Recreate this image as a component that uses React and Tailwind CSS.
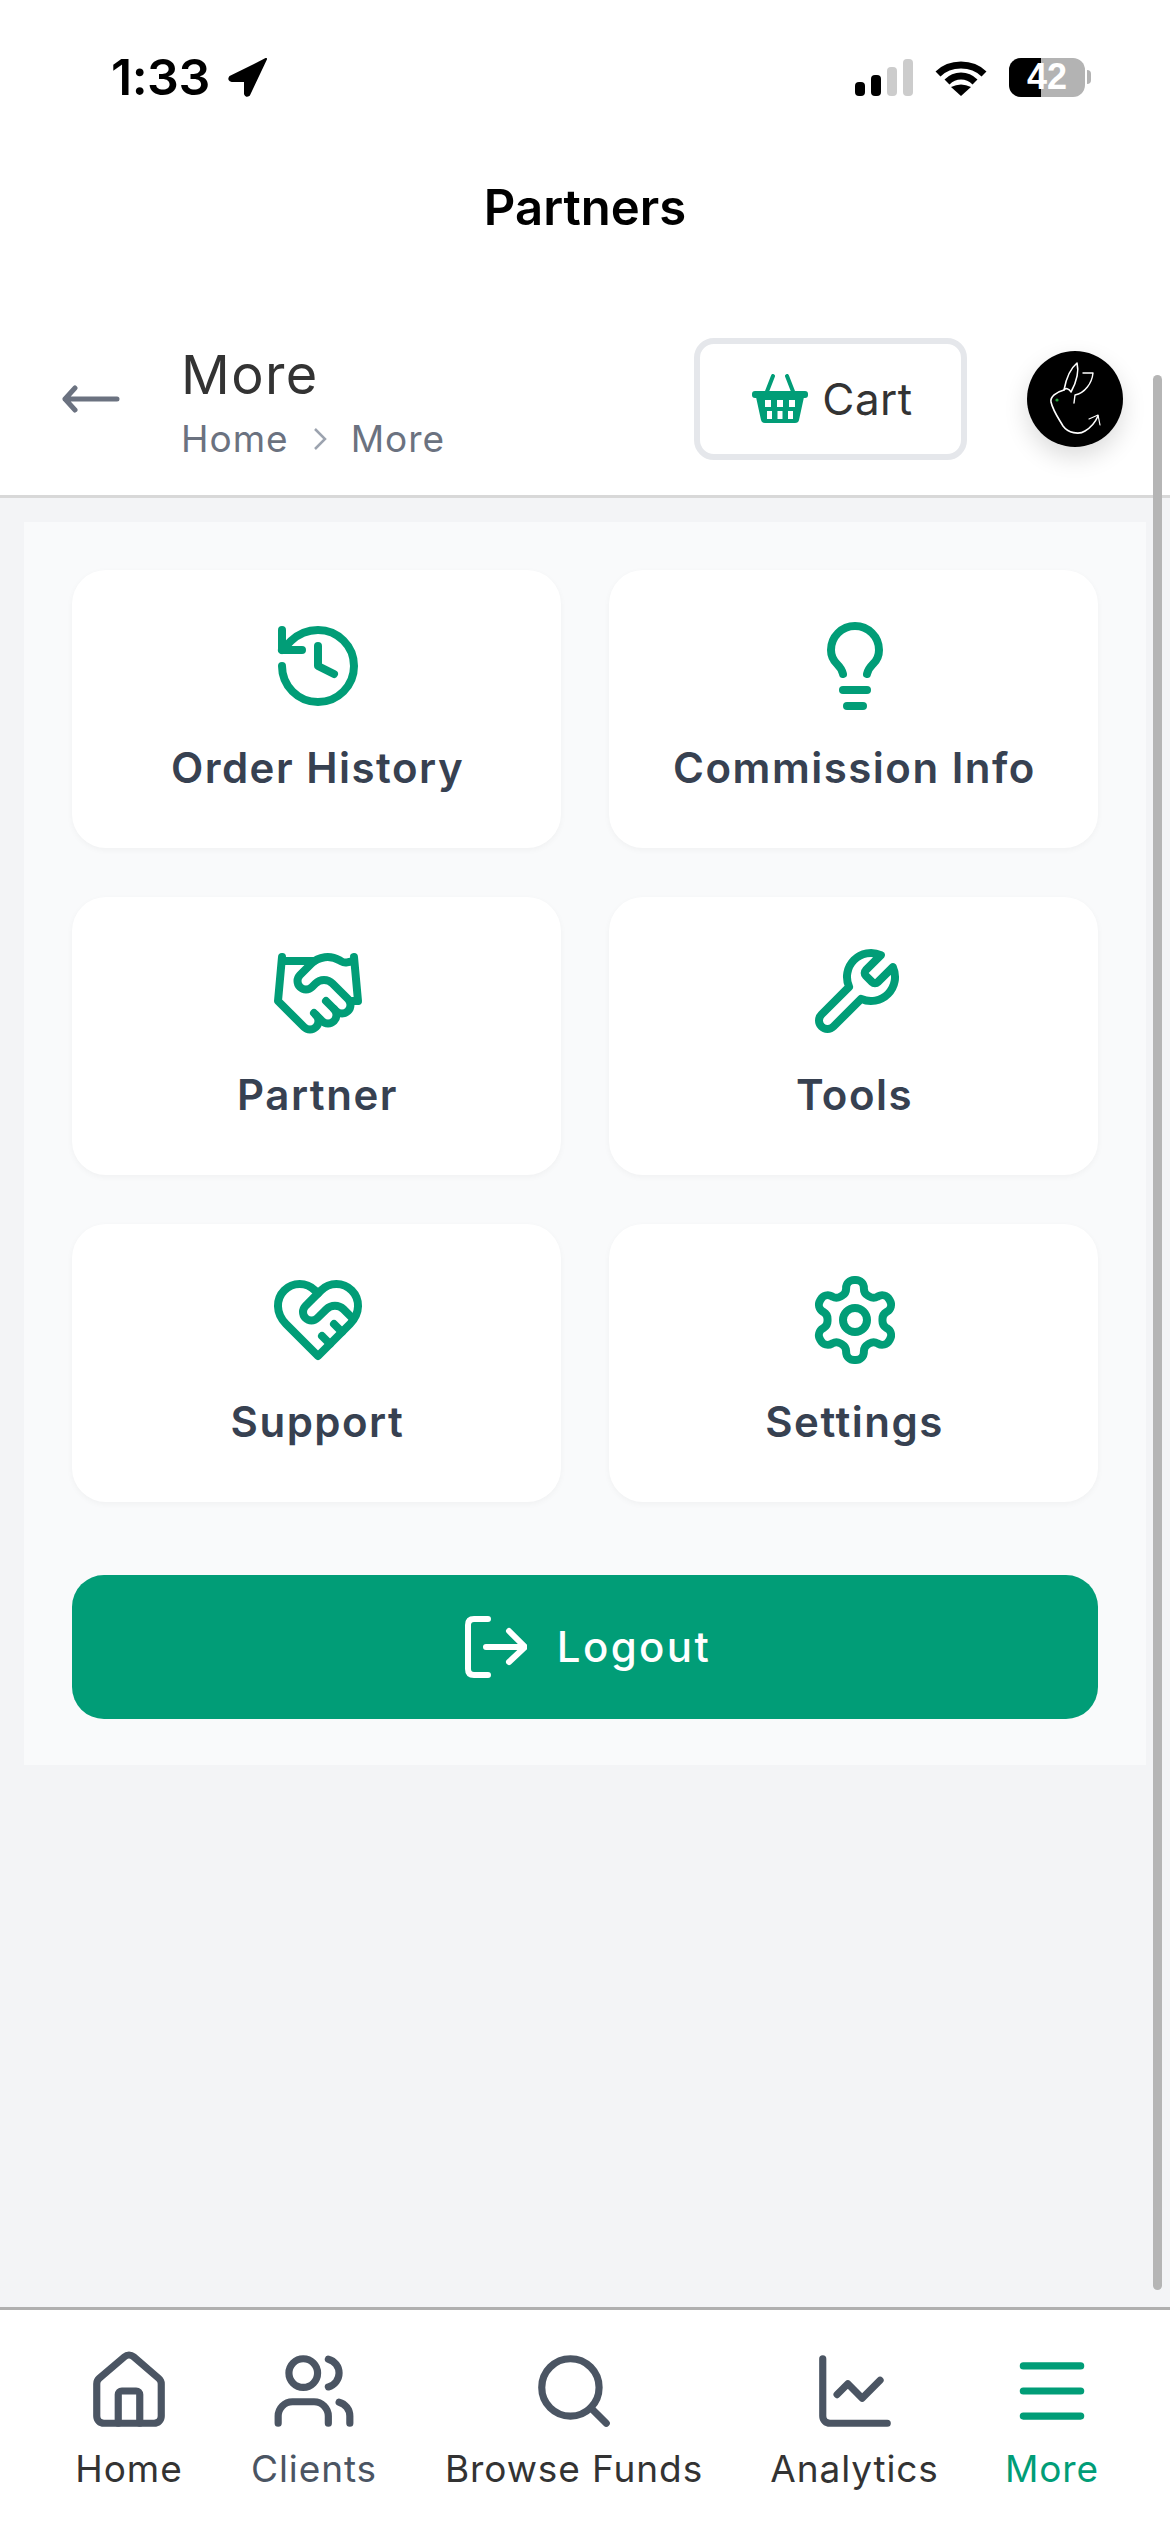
import React from "react";
import { History, Lightbulb, Handshake, House, Users, Search, ChartLine, Menu } from "lucide-react";

const sans = "font-['Inter','Noto_Sans',sans-serif]";

function Line({ size, strokeWidth, className, children }) {
  return (
    <svg width={size} height={size} viewBox="0 0 24 24" fill="none" stroke="currentColor" strokeWidth={strokeWidth} strokeLinecap="round" strokeLinejoin="round" className={className}>
      {children}
    </svg>
  );
}

const Wrench = (p) => (
  <Line {...p}>
    <path d="M14.7 6.3a1 1 0 0 0 0 1.4l1.6 1.6a1 1 0 0 0 1.4 0l3.77-3.77a6 6 0 0 1-7.94 7.94l-6.91 6.91a2.12 2.12 0 0 1-3-3l6.91-6.91a6 6 0 0 1 7.94-7.94l-3.76 3.76z" />
  </Line>
);

const Settings = (p) => (
  <Line {...p}>
    <path d="M12.22 2h-.44a2 2 0 0 0-2 2v.18a2 2 0 0 1-1 1.73l-.43.25a2 2 0 0 1-2 0l-.15-.08a2 2 0 0 0-2.73.73l-.22.38a2 2 0 0 0 .73 2.73l.15.1a2 2 0 0 1 1 1.72v.51a2 2 0 0 1-1 1.74l-.15.09a2 2 0 0 0-.73 2.73l.22.38a2 2 0 0 0 2.73.73l.15-.08a2 2 0 0 1 2 0l.43.25a2 2 0 0 1 1 1.73V20a2 2 0 0 0 2 2h.44a2 2 0 0 0 2-2v-.18a2 2 0 0 1 1-1.73l.43-.25a2 2 0 0 1 2 0l.15.08a2 2 0 0 0 2.73-.73l.22-.39a2 2 0 0 0-.73-2.73l-.15-.08a2 2 0 0 1-1-1.74v-.5a2 2 0 0 1 1-1.74l.15-.09a2 2 0 0 0 .73-2.73l-.22-.38a2 2 0 0 0-2.73-.73l-.15.08a2 2 0 0 1-2 0l-.43-.25a2 2 0 0 1-1-1.73V4a2 2 0 0 0-2-2z" />
    <circle cx="12" cy="12" r="3" />
  </Line>
);

const HeartHandshake = (p) => (
  <Line {...p}>
    <path d="M20.42 4.58a5.4 5.4 0 0 0-7.65 0l-.77.78-.77-.78a5.4 5.4 0 0 0-7.65 0C1.46 6.7 1.33 10.28 4 13l8 8 8-8c2.67-2.72 2.54-6.3.42-8.42z" />
    <path d="M12 5.36 8.87 8.5a2.13 2.13 0 0 0 0 3h0a2.13 2.13 0 0 0 3 0l2.26-2.21a3 3 0 0 1 4.22 0l2.4 2.4" />
    <path d="m18 15-2-2" />
    <path d="m15 18-2-2" />
  </Line>
);

const cards = [
  { label: "Order History", Icon: History },
  { label: "Commission Info", Icon: Lightbulb },
  { label: "Partner", Icon: Handshake },
  { label: "Tools", Icon: Wrench },
  { label: "Support", Icon: HeartHandshake },
  { label: "Settings", Icon: Settings },
];

const navItems = [
  { label: "Home", Icon: House, w: "w-[108px]", color: "text-[#333333]", icon: "text-[#4b5563]" },
  { label: "Clients", Icon: Users, w: "w-[124px]", color: "text-[#4b5563]", icon: "text-[#4b5563]" },
  { label: "Browse Funds", Icon: Search, w: "w-[258px]", color: "text-[#333333]", icon: "text-[#4b5563]" },
  { label: "Analytics", Icon: ChartLine, w: "w-[165px]", color: "text-[#333333]", icon: "text-[#4b5563]" },
  { label: "More", Icon: Menu, w: "w-[92px]", color: "text-[#019d77]", icon: "text-[#019d77]" },
];

function StatusBar() {
  return (
    <div className={`h-[154px] flex items-center justify-between pl-[111px] pr-[79px] text-black ${sans}`}>
      <div className="flex items-center gap-[18px]">
        <span className="text-[50px] font-semibold leading-none tracking-[-0.5px]">1:33</span>
        <svg width="40" height="40" viewBox="0 0 40 40" fill="currentColor">
          <path d="M38 2 L2 20 Q0 23 4 24 L17 24 L17 37 Q18 40 21 38 Z" strokeLinejoin="round" stroke="currentColor" strokeWidth="2" />
        </svg>
      </div>
      <div className="flex items-center">
        <svg width="58" height="38" viewBox="0 0 58 38" className="mt-[2px]">
          <rect x="0" y="23" width="10" height="14" rx="4" fill="#000" />
          <rect x="16" y="16" width="10" height="21" rx="4" fill="#000" />
          <rect x="32" y="8" width="10" height="29" rx="4" fill="#cccccc" />
          <rect x="48" y="0" width="10" height="37" rx="4" fill="#cccccc" />
        </svg>
        <svg width="52" height="38" viewBox="0 0 52 38" className="ml-[22px]">
          <path d="M26 7 C35 7 43 10 49 16" fill="none" stroke="#000" strokeWidth="7" />
          <path d="M26 7 C17 7 9 10 3 16" fill="none" stroke="#000" strokeWidth="7" />
          <path d="M26 18 C32 18 36 20 40 24 M26 18 C20 18 16 20 12 24" fill="none" stroke="#000" strokeWidth="7" />
          <path d="M26 38 L16 29 Q26 24 36 29 Z" fill="#000" />
        </svg>
        <div className="relative ml-[22px] flex h-[39px] w-[76px] overflow-hidden rounded-[12px] bg-[#b3b3b3] font-['Liberation_Sans',sans-serif]">
          <div className="h-full w-[32px] bg-black" />
          <span className="absolute inset-0 flex items-center justify-center text-[36px] font-bold text-white leading-none">42</span>
        </div>
        <div className="ml-[2px] h-[14px] w-[4px] rounded-r-full bg-[#b3b3b3]" />
      </div>
    </div>
  );
}

function BasketIcon() {
  return (
    <svg width="56" height="50" viewBox="0 0 56 50" className="text-[#019d77]">
      <path d="M14 20 L21 2 M42 20 L35 2" fill="none" stroke="currentColor" strokeWidth="4" strokeLinecap="round" />
      <rect x="0" y="17" width="56" height="7" rx="3" fill="currentColor" />
      <path d="M4 23 H52 L47 46 Q46.5 49 43 49 H13 Q9.5 49 9 46 Z" fill="currentColor" />
      <g fill="#ffffff">
        <rect x="13" y="26" width="6" height="7" />
        <rect x="25" y="26" width="6" height="7" />
        <rect x="37" y="26" width="6" height="7" />
        <rect x="15" y="37" width="5" height="8" />
        <rect x="25.5" y="37" width="5" height="8" />
        <rect x="36" y="37" width="5" height="8" />
      </g>
    </svg>
  );
}

function Avatar() {
  return (
    <div className="ml-[60px] size-[96px] rounded-full bg-black shadow-[0_10px_24px_rgba(0,0,0,0.14)]">
      <svg width="96" height="96" viewBox="0 0 96 96" fill="none" stroke="#ffffff" strokeLinecap="round" strokeLinejoin="round">
        <path d="M37 39 C39 28 44 17 50 12 C52 20 50 30 44 41 C42 37 38 37 37 39 Z" strokeWidth="1.6" />
        <path d="M56 22 L66 22 C65 32 58 42 48 44 L47 52" strokeWidth="1.4" />
        <path d="M37 39 C29 41 23 46 24 51 C26 60 32 68 36 75 C41 82 52 84 58 80 C63 77 68 72 71 65" strokeWidth="1.6" />
        <path d="M62 68 L71 64 L73 74" strokeWidth="1.2" />
        <circle cx="30" cy="49" r="1.6" fill="#22a33a" stroke="none" />
      </svg>
    </div>
  );
}

function SubHeader() {
  return (
    <div className={`flex h-[236px] items-start border-b-[3px] border-[#d8d8d8] pt-[76px] pl-[62px] pr-[47px] ${sans}`}>
      <div className="flex h-[122px] w-full items-center">
        <svg width="58" height="28" viewBox="0 0 58 28" fill="none" stroke="#6b7280" strokeWidth="5" strokeLinecap="round" strokeLinejoin="round">
          <path d="M3 14 H55 M13 3 L3 14 L13 25" />
        </svg>
        <div className="ml-[61px] mt-[5px] flex flex-col">
          <span className="text-[54px] leading-[68px] tracking-[1.4px] text-[#333333]">More</span>
          <div className="mt-[6px] flex items-center text-[37px] leading-[48px] tracking-[1px] text-[#6b7280]">
            <span>Home</span>
            <svg width="16" height="26" viewBox="0 0 16 26" fill="none" stroke="#9ca3af" strokeWidth="2.5" className="mx-[23px]">
              <path d="M3 3 L13 13 L3 23" />
            </svg>
            <span>More</span>
          </div>
        </div>
        <div className="ml-auto flex h-[122px] w-[273px] items-center justify-center gap-[14px] rounded-[20px] border-[6px] border-[#e5e7eb] bg-white pl-[4px]">
          <BasketIcon />
          <span className="text-[44px] tracking-[0.5px] text-[#333333]">Cart</span>
        </div>
        <Avatar />
      </div>
    </div>
  );
}

function Card({ label, Icon }) {
  return (
    <div className="flex h-[278px] flex-col items-center rounded-[34px] bg-white pl-[2px] pt-[48px] shadow-[0_2px_6px_rgba(0,0,0,0.04)]">
      <Icon size={96} strokeWidth={2} className="text-[#019d77]" />
      <span className="mt-[24px] text-[42px] font-semibold leading-[60px] tracking-[1.5px] text-[#374151] whitespace-nowrap">{label}</span>
    </div>
  );
}

function LogoutButton() {
  return (
    <div className="mt-[73px] flex h-[144px] items-center justify-center gap-[30px] rounded-[32px] bg-[#019d77] pl-[6px] text-white">
      <svg width="62" height="62" viewBox="0 0 62 62" fill="none" stroke="#ffffff" strokeWidth="6" strokeLinecap="round" strokeLinejoin="round">
        <path d="M23 3 H9 Q3 3 3 9 V53 Q3 59 9 59 H23" />
        <path d="M21 31 H59 M44 15 L60 31 L44 46" />
      </svg>
      <span className="text-[42px] font-medium leading-none tracking-[2.4px]">Logout</span>
    </div>
  );
}

function BottomNav() {
  return (
    <div className={`flex h-[225px] justify-between border-t-[3px] border-[#b0b0b0] bg-white pt-[38px] pl-[75px] pr-[72px] ${sans}`}>
      {navItems.map(({ label, Icon, w, color, icon }) => (
        <div key={label} className={`flex flex-col items-center ${w}`}>
          <Icon size={86} strokeWidth={2} className={icon} />
          <span className={`mt-[11px] text-[37px] leading-[48px] tracking-[0.9px] whitespace-nowrap ${color}`}>{label}</span>
        </div>
      ))}
    </div>
  );
}

export default function App() {
  return (
    <div className="relative flex h-[2532px] w-[1170px] flex-col overflow-hidden bg-[#f3f4f6]">
      <div className="bg-white">
        <StatusBar />
        <div className={`flex h-[108px] items-center justify-center text-[49px] font-semibold text-black ${sans}`}>
          Partners
        </div>
        <SubHeader />
      </div>
      <div className={`mx-[24px] mt-[24px] bg-[#f9fafb] px-[48px] pt-[48px] pb-[46px] ${sans}`}>
        <div className="grid grid-cols-2 gap-x-[48px] gap-y-[49px]">
          {cards.map((c) => (
            <Card key={c.label} {...c} />
          ))}
        </div>
        <LogoutButton />
      </div>
      <div className="flex-1" />
      <BottomNav />
      <div className="absolute right-[8px] top-[375px] h-[1915px] w-[9px] rounded-full bg-[#b5b5b5]" />
    </div>
  );
}
